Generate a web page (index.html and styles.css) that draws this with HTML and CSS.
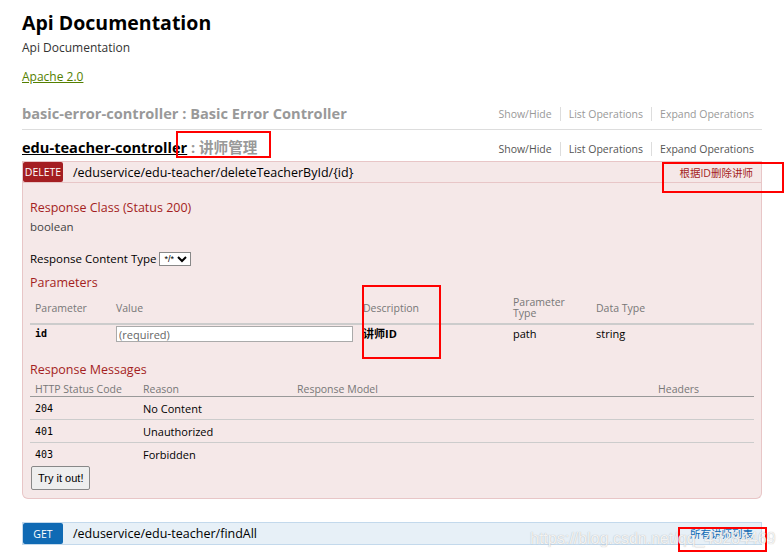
FILE: index.html
```html
<!DOCTYPE html>
<html>
<head>
<meta charset="utf-8">
<link rel="stylesheet" href="styles.css">
</head>
<body>
<div class="page">
  <h1 class="title">Api Documentation</h1>
  <div class="subtitle">Api Documentation</div>
  <a class="license" href="#">Apache 2.0</a>

  <div class="resource">
    <div class="res-head muted-head">
      <h2 class="res-title"><span class="res-name">basic-error-controller</span> : Basic Error Controller</h2>
      <ul class="ops-links">
        <li>Show/Hide</li><li>List Operations</li><li>Expand Operations</li>
      </ul>
    </div>
  </div>

  <div class="resource">
    <div class="res-head active-head">
      <h2 class="res-title"><a class="res-name" href="#">edu-teacher-controller</a> <span class="res-desc">: 讲师管理</span></h2>
      <ul class="ops-links">
        <li>Show/Hide</li><li>List Operations</li><li>Expand Operations</li>
      </ul>
    </div>

    <div class="op op-delete">
      <div class="op-bar">
        <span class="verb">DELETE</span>
        <span class="path">/eduservice/edu-teacher/deleteTeacherById/{id}</span>
        <span class="summary">根据ID删除讲师</span>
      </div>
      <div class="op-body">
        <h4 class="sec">Response Class (Status 200)</h4>
        <div class="model">boolean</div>
        <div class="ctype">Response Content Type <select class="sel"><option>*/*</option></select></div>
        <h4 class="sec sec-params">Parameters</h4>
        <table class="ptable">
          <thead>
            <tr>
              <th class="c-p">Parameter</th>
              <th class="c-v">Value</th>
              <th class="c-d">Description</th>
              <th class="c-t">Parameter<br>Type</th>
              <th class="c-dt">Data Type</th>
            </tr>
          </thead>
          <tbody>
            <tr>
              <td class="code">id</td>
              <td><input class="req" type="text" placeholder="(required)"></td>
              <td class="bold">讲师ID</td>
              <td>path</td>
              <td>string</td>
            </tr>
          </tbody>
        </table>
        <h4 class="sec sec-rm">Response Messages</h4>
        <table class="rtable">
          <thead>
            <tr>
              <th class="r1">HTTP Status Code</th>
              <th class="r2">Reason</th>
              <th class="r3">Response Model</th>
              <th class="r4">Headers</th>
            </tr>
          </thead>
          <tbody>
            <tr><td class="code">204</td><td>No Content</td><td></td><td></td></tr>
            <tr><td class="code">401</td><td>Unauthorized</td><td></td><td></td></tr>
            <tr><td class="code">403</td><td>Forbidden</td><td></td><td></td></tr>
          </tbody>
        </table>
        <button class="try">Try it out!</button>
      </div>
    </div>

    <div class="op op-get">
      <div class="op-bar">
        <span class="verb">GET</span>
        <span class="path">/eduservice/edu-teacher/findAll</span>
        <span class="summary">所有讲师列表</span>
      </div>
    </div>
  </div>
</div>

<div class="mark mark-1"></div>
<div class="mark mark-2"></div>
<div class="mark mark-3"></div>
<div class="mark mark-4"></div>
<div class="watermark">https://blog.csdn.net/qq_43284469</div>
</body>
</html>
```

FILE: styles.css
```css
* { box-sizing: border-box; }
body {
  margin: 0;
  background: #fff;
  font-family: "Open Sans", "Noto Sans CJK SC", sans-serif;
  color: #000;
}
.page {
  width: 784px;
  padding: 10px 22px 0 22px;
}
.title {
  margin: 0;
  font-size: 19.5px;
  line-height: 26px;
  font-weight: 700;
}
.subtitle {
  margin-top: 3px;
  font-size: 12px;
  line-height: 18px;
  color: #333;
}
.license {
  display: inline-block;
  margin-top: 11px;
  font-size: 12px;
  line-height: 18px;
  color: #547f00;
  text-decoration: underline;
}
.resource { width: 740px; }
.res-head {
  display: flex;
  justify-content: space-between;
  align-items: flex-end;
  height: 33px;
  padding-bottom: 5px;
}
.muted-head {
  margin-top: 11px;
  border-bottom: 1px solid #ddd;
}
.res-title {
  margin: 0;
  font-size: 14.6px;
  line-height: 22px;
  font-weight: 700;
  color: #999;
}
.muted-head .res-name { color: #999; }
.active-head { height: 31px; padding-bottom: 3px; }
.active-head .res-name { color: #000; text-decoration: underline; }
.res-desc { color: #999; }
.ops-links {
  display: flex;
  list-style: none;
  margin: 0;
  padding: 0 8px 3px 0;
  font-size: 10.5px;
  line-height: 14px;
  color: #999;
}
.active-head .ops-links { color: #555; padding-bottom: 2px; }
.ops-links li {
  padding: 0 8px;
  border-left: 1px solid #ddd;
}
.ops-links li:first-child { border-left: none; padding-left: 0; }
.ops-links li:last-child { padding-right: 0; }

.op-bar {
  display: flex;
  align-items: center;
  height: 22px;
  border: 1px solid;
  font-size: 12.5px;
}
.verb {
  width: 40px;
  height: 20px;
  display: flex;
  align-items: center;
  justify-content: center;
  color: #fff;
  font-size: 10.5px;
  border-radius: 2px;
}
.path { margin-left: 10px; flex: 1; color: #000; }
.summary { font-size: 10.5px; margin-right: 8px; }

.op-delete .op-bar { background: #f5e8e8; border-color: #e8c6c7; }
.op-delete .verb { background: #a41e22; }
.op-delete .summary { color: #a41e22; }
.op-delete .op-body {
  background: #f5e8e8;
  border: 1px solid #e8c6c7;
  border-top: none;
  border-radius: 0 0 6px 6px;
  padding: 16px 7px 8px 7px;
  height: 316px;
}
.sec {
  margin: 0;
  font-weight: 400;
  font-size: 12.5px;
  line-height: 18px;
  color: #a41e22;
}
.model {
  margin-top: 0;
  font-size: 11.5px;
  line-height: 20px;
  color: #444;
}
.ctype {
  margin-top: 13px;
  font-size: 11.5px;
  line-height: 18px;
  display: flex;
  align-items: center;
  gap: 3px;
}
.sel {
  font-size: 9px;
  height: 14px;
  padding: 0;
  border: 1px solid #888;
  background: #fff;
  font-family: "Liberation Sans", sans-serif;
}
.sec-params { margin-top: 6px; }

.ptable, .rtable {
  border-collapse: collapse;
  width: 724px;
  table-layout: fixed;
}
.ptable th, .rtable th {
  font-weight: 400;
  font-size: 10.5px;
  color: #777;
  text-align: left;
  padding: 0 5px;
}
.ptable th {
  line-height: 11px;
  height: 32px;
  vertical-align: middle;
  border-bottom: 2px solid #ccc;
  padding-top: 1px;
}
.c-p { width: 81px; }
.c-v { width: 247px; }
.c-d { width: 150px; }
.c-t { width: 83px; }
.ptable td {
  font-size: 11px;
  padding: 1px 5px 19px 5px;
  vertical-align: top;
  line-height: 16px;
}
.code {
  font-family: "DejaVu Sans Mono", monospace;
  font-size: 10px !important;
  font-weight: 700;
}
.rtable .code { font-weight: 400; }
.bold { font-weight: 700; }
.req {
  width: 237px;
  height: 16px;
  border: 1px solid #aaa;
  font-size: 11px;
  padding: 0 2px;
  font-family: "Open Sans", sans-serif;
  display: block;
}
.req::placeholder { color: #666; }
.sec-rm { margin-top: 0; }
.rtable th {
  line-height: 14px;
  height: 17px;
  border-bottom: 1px solid #999;
  padding-top: 1px;
  vertical-align: bottom;
}
.r1 { width: 108px; }
.r2 { width: 154px; }
.r3 { width: 361px; }
.rtable td {
  font-size: 11px;
  height: 23px;
  padding: 2px 5px 0 5px;
  border-bottom: 1px solid #ccc;
  line-height: 14px;
}
.rtable tbody tr:last-child td { border-bottom: none; }
.try {
  margin-top: -4px;
  margin-left: 1px;
  height: 24px;
  padding: 0 6px;
  font-size: 11px;
  font-family: "Liberation Sans", sans-serif;
  background: #eee;
  border: 1px solid #888;
  border-radius: 2px;
  color: #000;
}

.op-get { margin-top: 23px; }
.op-get .op-bar { background: #e7f0f7; border-color: #c3d9ec; height: 23px; }
.op-get .verb { background: #0f6ab4; height: 21px; }
.op-get .summary { color: #0f6ab4; }

.mark {
  position: absolute;
  border: 2px solid #ff0000;
}
.mark-1 { left: 176px; top: 131px; width: 95px; height: 27px; }
.mark-2 { left: 662px; top: 162px; width: 122px; height: 31px; }
.mark-3 { left: 362px; top: 285px; width: 79px; height: 74px; }
.mark-4 { left: 678px; top: 527px; width: 89px; height: 25px; }
.watermark {
  position: absolute;
  left: 530px;
  top: 530px;
  font-family: "Liberation Sans", sans-serif;
  font-size: 16px;
  color: rgba(255, 255, 255, 0.85);
  text-shadow: 0 0 1px rgba(120, 120, 120, 0.6);
}
```
